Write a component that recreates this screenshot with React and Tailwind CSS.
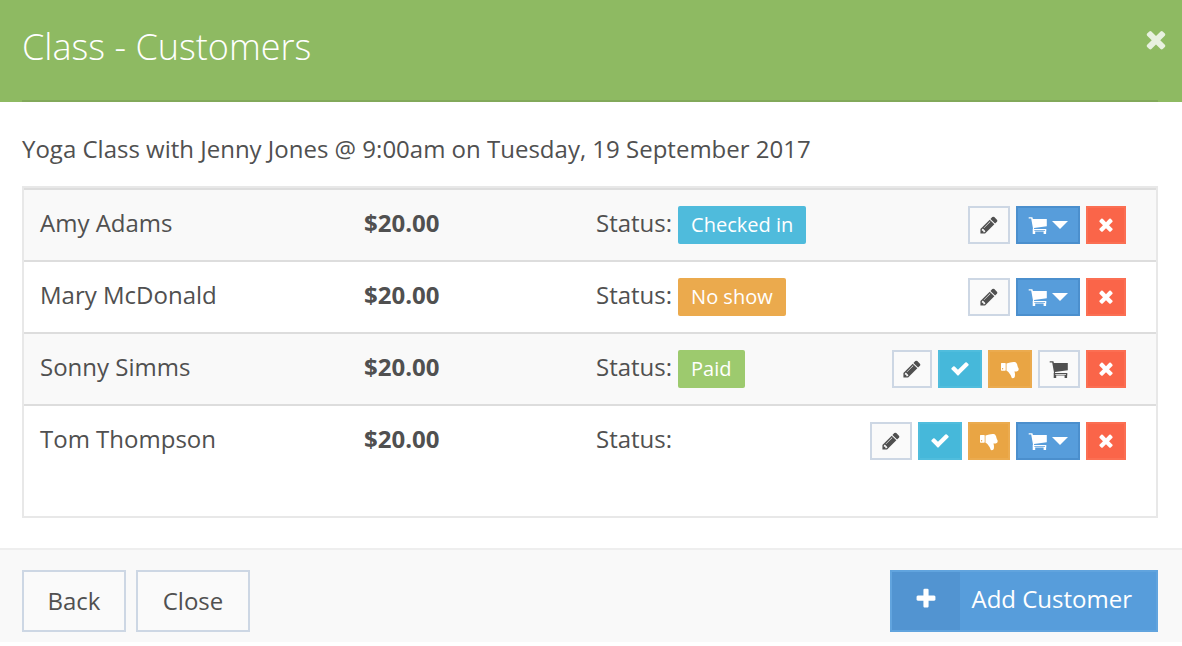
const ICONS = {
  pencil: {
    box: "0 0 1792 1792",
    d: "M491 1536l91-91-235-235-91 91v107h128v128h107zm523-928q0-22-22-22-10 0-17 7l-542 542q-7 7-7 17 0 22 22 22 10 0 17-7l542-542q7-7 7-17zm-54-192l416 416-832 832h-416v-416zm683 96q0 53-37 90l-166 166-416-416 166-165q36-38 90-38 53 0 91 38l235 234q37 39 37 91z",
  },
  times: {
    box: "0 48 1792 1792",
    d: "M1490 1322q0 40-28 68l-136 136q-28 28-68 28t-68-28l-294-294-294 294q-28 28-68 28t-68-28l-136-136q-28-28-28-68t28-68l294-294-294-294q-28-28-28-68t28-68l136-136q28-28 68-28t68 28l294 294 294-294q28-28 68-28t68 28l136 136q28 28 28 68t-28 68l-294 294 294 294q28 28 28 68z",
  },
  check: {
    box: "0 48 1792 1792",
    d: "M1671 566q0 40-28 68l-724 724-136 136q-28 28-68 28t-68-28l-136-136-362-362q-28-28-28-68t28-68l136-136q28-28 68-28t68 28l294 295 656-657q28-28 68-28t68 28l136 136q28 28 28 68z",
  },
  plus: {
    box: "0 0 1792 1792",
    d: "M1600 736v192q0 40-28 68t-68 28h-416v416q0 40-28 68t-68 28h-192q-40 0-68-28t-28-68v-416h-416q-40 0-68-28t-28-68v-192q0-40 28-68t68-28h416v-416q0-40 28-68t68-28h192q40 0 68 28t28 68v416h416q40 0 68 28t28 68z",
  },
  thumbsDown: {
    box: "0 0 20 20",
    d: "M1.600 4h3.500q.6 0 .6.600v6.500q0 .6-.6.600h-3.500q-.6 0-.6-.6v-6.500q0-.6.6-.6zm1 5a.7.700 0 1 0 0 1.400.7.700 0 0 0 0-1.400zM6.500 4.400q1.700-.1 3.700-.9 1.700-.6 3.300-.6h1.200q1.700 0 1.900 1.700.8.600.6 1.700.7.700.5 1.800 1 .9 1 2.200 0 2-2 2.100h-2.300q.7 1.600.6 3.500 0 3.400-2.500 3.300-1 0-1.300-1.600-.2-1.300-1-2.200l-1.800-2.300q-.9-1.200-1.900-1.300z",
  },
  cart: {
    box: "0 0 20 20",
    d: "M.7 2.300h3.700l.5 1.700h13.900v7.200l-12.800 1.800.1.900h12.200v2.700h-.2v2.400h-2.500v-2.400h-8.400v2.400h-2.500v-5l.3-.6-1.800-9.800h-2.500zM6.300 15v.700h10.700v-.7z",
  },
};

function Icon({ name, className }) {
  return (
    <svg viewBox={ICONS[name].box} fill="currentColor" aria-hidden="true" className={className}>
      <path d={ICONS[name].d} fillRule="evenodd" />
    </svg>
  );
}

const STYLES = {
  light: "border-[#cdd7e4] bg-[#fafafa] text-[#505050]",
  check: "border-[#50bddd] bg-[#46b8da] text-white",
  warn: "border-[#ebab4f] bg-[#e9a544] text-white",
  danger: "border-[#fb6f53] bg-[#fa6549] text-white",
  cart: "border-[#4b8fcd] bg-[#579ddb] text-white",
};

function ActionButton({ tone, width, label, children }) {
  return (
    <button type="button" aria-label={label} className={`flex h-[38px] items-center justify-center border-2 ${width} ${STYLES[tone]}`}>
      {children}
    </button>
  );
}

const pencil = (width) => <ActionButton key="edit" tone="light" width={width} label="Edit"><Icon name="pencil" className="size-5" /></ActionButton>;
const check = <ActionButton key="check" tone="check" width="w-11" label="Check in"><Icon name="check" className="size-5" /></ActionButton>;
const noShow = (width) => <ActionButton key="noshow" tone="warn" width={width} label="No show"><Icon name="thumbsDown" className="size-5" /></ActionButton>;
const remove = <ActionButton key="remove" tone="danger" width="w-10" label="Remove"><Icon name="times" className="size-5" /></ActionButton>;
const plainCart = <ActionButton key="cart" tone="light" width="w-[42px]" label="View sale"><Icon name="cart" className="size-5" /></ActionButton>;
const cartMenu = (
  <ActionButton key="menu" tone="cart" width="w-16" label="Payment options">
    <span className="flex items-center gap-1">
      <Icon name="cart" className="size-5" />
      <svg viewBox="0 0 16 8" fill="currentColor" aria-hidden="true" className="h-2 w-4"><path d="M0 0h16l-8 8z" /></svg>
    </span>
  </ActionButton>
);

const ROWS = [
  { name: "Amy Adams", status: "Checked in", badge: "bg-[#4fbbdc]", actions: [pencil("w-[42px]"), cartMenu, remove] },
  { name: "Mary McDonald", status: "No show", badge: "bg-[#ebaa4d]", actions: [pencil("w-[42px]"), cartMenu, remove] },
  { name: "Sonny Simms", status: "Paid", badge: "bg-[#9dca6e]", actions: [pencil("w-10"), check, noShow("w-11"), plainCart, remove] },
  { name: "Tom Thompson", actions: [pencil("w-[42px]"), check, noShow("w-[42px]"), cartMenu, remove] },
];

const CELL = "h-[72px] border-t-2 border-[#dddddd]";

export default function App() {
  return (
    <div className="bg-white font-['Open_Sans',sans-serif] text-2xl text-[#505050]">
      <header className="bg-[#8eba62] px-[22px]">
        <div className="mr-0.5 flex h-[102px] items-start justify-between border-b-2 border-[#82a95a] pt-5 pb-6">
          <h1 className="text-4xl leading-[54px] font-light text-white">Class - Customers</h1>
          <button type="button" aria-label="Close dialog" className="-mr-3.5 mt-1 flex size-8 items-center justify-center text-[#e8f1e0]">
            <Icon name="times" className="size-7" />
          </button>
        </div>
      </header>
      <main className="px-[22px] pt-[29px] pb-[30px]">
        <p className="leading-9">Yoga Class with Jenny Jones @ 9:00am on Tuesday, 19 September 2017</p>
        <div className="mt-[19px] mr-0.5 border-2 border-[#e8e8e8] pb-10">
          <table className="w-full table-fixed border-separate border-spacing-0">
            <colgroup>
              <col className="w-[324px]" />
              <col className="w-[232px]" />
              <col className="w-[250px]" />
              <col />
            </colgroup>
            <tbody>
              {ROWS.map((row) => (
                <tr key={row.name} className="odd:bg-[#f9f9f9]">
                  <td className={`px-4 pb-1 leading-9 ${CELL}`}>{row.name}</td>
                  <td className={`px-4 pb-1 leading-9 font-bold ${CELL}`}>$20.00</td>
                  <td className={`px-4 ${CELL}`}>
                    <div className="flex h-[38px] items-center gap-1.5 whitespace-nowrap">
                      <span className="pb-1 leading-9">Status:</span>
                      {row.status && <span className={`h-[38px] rounded-xs px-[13px] text-xl leading-[38px] text-white ${row.badge}`}>{row.status}</span>}
                    </div>
                  </td>
                  <td className={`pr-[30px] ${CELL}`}>
                    <div className="flex justify-end gap-1.5">{row.actions}</div>
                  </td>
                </tr>
              ))}
            </tbody>
          </table>
        </div>
      </main>
      <footer className="flex items-center justify-between border-t-2 border-[#eeeeee] bg-[#f9f9f9] pt-5 pr-6 pb-2.5 pl-[22px]">
        <div className="flex gap-2.5">
          <button type="button" className="h-[62px] w-[104px] border-2 border-[#cdd7e4] bg-[#fafafa]">Back</button>
          <button type="button" className="h-[62px] w-[114px] border-2 border-[#cdd7e4] bg-[#fafafa]">Close</button>
        </div>
        <button type="button" className="flex h-[62px] border-2 border-[#61a4de] bg-[#579ddb] text-white">
          <span className="flex h-full w-[68px] items-center justify-center bg-[#5294d1] pb-1">
            <Icon name="plus" className="size-6" />
          </span>
          <span className="pr-6 pl-[11px] leading-[54px]">Add Customer</span>
        </button>
      </footer>
    </div>
  );
}
